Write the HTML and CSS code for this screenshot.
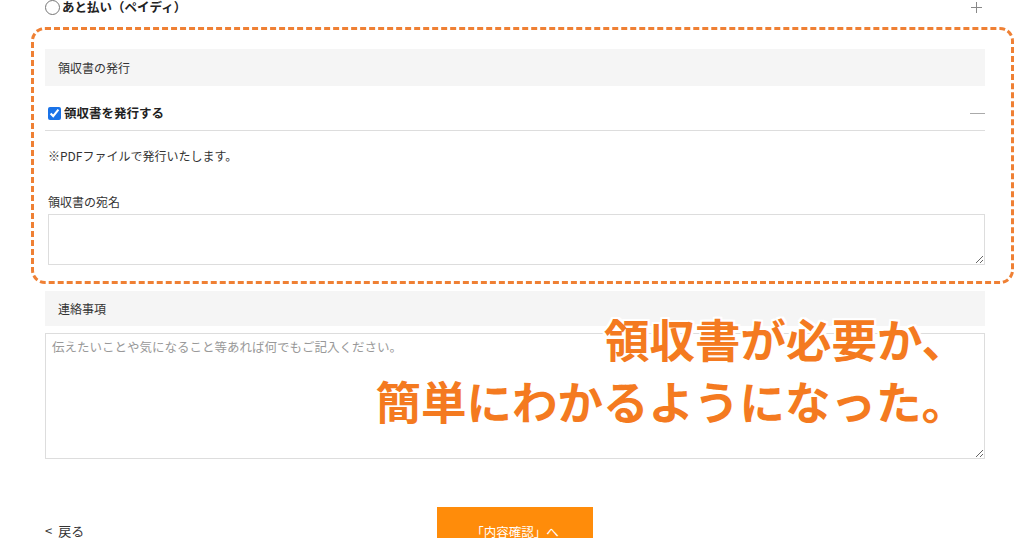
FILE: index.html
```html
<!DOCTYPE html>
<html lang="ja">
<head>
<meta charset="utf-8">
<link rel="stylesheet" href="styles.css">
</head>
<body>
<div class="page">
  <div class="pay-row">
    <label class="radio-label"><input type="radio" name="pay" class="radio"> あと払い（ペイディ）</label>
    <span class="plus"></span>
  </div>

  <section class="highlight">
    <div class="bar">領収書の発行</div>
    <div class="check-row">
      <label class="check-label"><input type="checkbox" class="check" checked> 領収書を発行する</label>
      <span class="minus"></span>
    </div>
    <p class="note">※PDFファイルで発行いたします。</p>
    <p class="field-label">領収書の宛名</p>
    <textarea class="receipt-name"></textarea>
  </section>

  <div class="bar bar-contact">連絡事項</div>
  <textarea class="contact" placeholder="伝えたいことや気になること等あれば何でもご記入ください。"></textarea>

  <div class="footer">
    <a class="back"><span class="chev">&lt;</span>戻る</a>
    <button class="confirm">「内容確認」へ</button>
    <span></span>
  </div>
</div>

<div class="annotation">領収書が必要か、<br>簡単にわかるようになった。</div>
</body>
</html>
```

FILE: styles.css
```css
* { box-sizing: border-box; }
html, body { margin: 0; padding: 0; background: #fff; }
body {
  font-family: "Noto Sans CJK JP", "Noto Sans", sans-serif;
  color: #333;
  font-size: 12px;
  overflow: hidden;
  height: 538px;
}
.page {
  width: 1024px;
  padding: 0 39px 0 45px;
}
.pay-row {
  display: flex;
  justify-content: space-between;
  align-items: center;
  height: 14px;
}
.radio-label {
  display: flex;
  align-items: center;
  font-weight: 700;
  font-size: 12.5px;
  line-height: 14px;
  color: #222;
}
.radio {
  width: 15px;
  height: 15px;
  margin: 0 2px 0 0;
}
.plus {
  position: relative;
  width: 11px;
  height: 11px;
  margin-right: 3px;
}
.plus::before, .plus::after {
  content: "";
  position: absolute;
  background: #888;
}
.plus::before { left: 0; right: 0; top: 5px; height: 1px; }
.plus::after { top: 0; bottom: 0; left: 5px; width: 1px; }

.highlight {
  margin: 13px -29px 0 -14px;
  border: 3px dashed #ef8034;
  border-radius: 14px;
  padding: 19px 26px 16px 11px;
}
.bar {
  background: #f5f5f5;
  height: 37px;
  display: flex;
  align-items: center;
  padding-left: 13px;
  font-size: 12px;
  color: #333;
}
.check-row {
  display: flex;
  justify-content: space-between;
  align-items: center;
  padding: 19px 0 9px 3px;
  border-bottom: 1px solid #ddd;
  line-height: 16px;
}
.check-label {
  display: flex;
  align-items: center;
  font-weight: 700;
  font-size: 12.5px;
  color: #222;
}
.check {
  width: 13px;
  height: 13px;
  margin: 0 3px 0 0;
  accent-color: #1a73e8;
}
.minus {
  width: 15px;
  height: 1px;
  background: #aaa;
}
.note {
  margin: 15px 0 0 3px;
  line-height: 20px;
  font-size: 12px;
}
.field-label {
  margin: 26px 0 0 3px;
  line-height: 20px;
  font-size: 12px;
}
.receipt-name {
  display: block;
  margin: 2px 0 0 3px;
  width: calc(100% - 3px);
  height: 51px;
  border: 1px solid #ddd;
  resize: vertical;
}
.bar-contact {
  margin-top: 7px;
  height: 35px;
}
.contact {
  display: block;
  margin-top: 7px;
  width: 100%;
  height: 126px;
  border: 1px solid #ddd;
  padding: 4px 6px;
  font-family: "Noto Sans CJK JP", sans-serif;
  font-size: 12.5px;
  line-height: 18px;
  color: #333;
  resize: vertical;
}
.contact::placeholder { color: #999; }
.footer {
  display: grid;
  grid-template-columns: 1fr 156px 1fr;
  align-items: center;
  margin-top: 48px;
}
.back {
  font-size: 13px;
  color: #333;
  align-self: center;
  margin-top: -2px;
}
.chev { margin-right: 6px; }
.confirm {
  height: 48px;
  border: none;
  background: #ff8c0a;
  color: #fff;
  font-family: "Noto Sans CJK JP", sans-serif;
  font-size: 12.5px;
}
.annotation {
  position: absolute;
  right: 57px;
  top: 307px;
  text-align: right;
  font-size: 45.5px;
  line-height: 62px;
  font-weight: 700;
  color: #f47a20;
  text-shadow: 0 0 3px #fff, 2px 0 0 #fff, -2px 0 0 #fff, 0 2px 0 #fff, 0 -2px 0 #fff, 2px 2px 0 #fff, -2px -2px 0 #fff, 2px -2px 0 #fff, -2px 2px 0 #fff;
}
```
